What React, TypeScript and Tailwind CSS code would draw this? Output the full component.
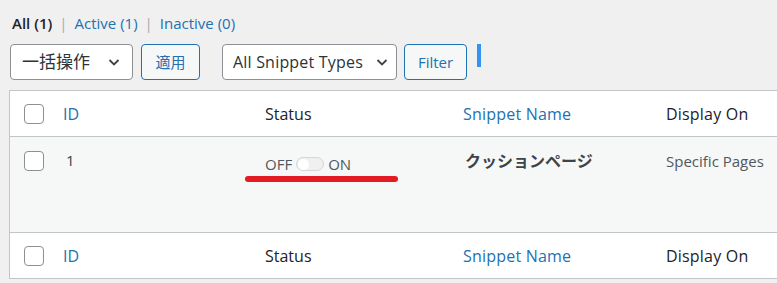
import React from "react";

const Checkbox = () => (
  <span className="block w-5 h-5 rounded border border-[#8c8f94] bg-white" />
);

const Chevron = () => (
  <svg width="16" height="16" viewBox="0 0 16 16" className="text-[#3c434a]">
    <path d="M3.5 6 L8 10.5 L12.5 6" fill="none" stroke="currentColor" strokeWidth="1.8" />
  </svg>
);

const HeaderRow = () => (
  <div className="grid grid-cols-[53px_202px_198px_203px_1fr] items-center h-[45px] bg-white text-[16px]">
    <div className="pl-[14px]">
      <Checkbox />
    </div>
    <div className="text-[#2271b1]">ID</div>
    <div className="text-[#1d2327]">Status</div>
    <div className="text-[#2271b1] tracking-[0.2px]">Snippet Name</div>
    <div className="text-[#1d2327] whitespace-nowrap tracking-[0.2px]">Display On</div>
  </div>
);

const App = () => {
  return (
    <div
      className="w-[777px] h-[283px] overflow-hidden bg-[#f0f0f1]"
      style={{ fontFamily: '"Open Sans", "Noto Sans CJK JP", sans-serif' }}
    >
      <div className="pl-[12px] pt-[11px] flex items-center gap-[7px] text-[15px] h-[22px] mt-[1px] box-content">
        <span className="font-semibold text-[#1d2327]">All (1)</span>
        <span className="text-[#a7aaad]">|</span>
        <span className="text-[#2271b1]">Active (1)</span>
        <span className="text-[#a7aaad]">|</span>
        <span className="text-[#2271b1]">Inactive (0)</span>
      </div>

      <div className="flex items-center pl-[10px] mt-[10px] h-[36px]">
        <div className="flex items-center justify-between w-[123px] h-[36px] border border-[#8c8f94] rounded bg-white pl-[11px] pr-[10px] text-[17px] text-[#2c3338]">
          <span>一括操作</span>
          <Chevron />
        </div>
        <div className="ml-[8px] flex items-center justify-center w-[59px] h-[36px] border border-[#2271b1] rounded bg-[#f6f7f7] text-[15px] text-[#2271b1]">
          適用
        </div>
        <div className="ml-[22px] flex items-center justify-between w-[175px] h-[36px] border border-[#8c8f94] rounded bg-white pl-[10px] pr-[6px] text-[16px] text-[#2c3338] whitespace-nowrap tracking-[0.2px]">
          <span>All Snippet Types</span>
          <Chevron />
        </div>
        <div className="ml-[7px] flex items-center justify-center w-[63px] h-[36px] border border-[#2271b1] rounded bg-[#f6f7f7] text-[15px] text-[#2271b1]">
          Filter
        </div>
        <div className="ml-[10px] self-start w-[4px] h-[23px] bg-[#3393f4]" />
      </div>

      <div className="ml-[9px] mt-[10px] border border-[#c3c4c7] border-r-0">
        <HeaderRow />
        <div className="grid grid-cols-[53px_202px_198px_203px_1fr] h-[97px] bg-[#f6f7f7] border-y border-[#c3c4c7] pt-[14px] text-[15px]">
          <div className="pl-[14px]">
            <Checkbox />
          </div>
          <div className="pl-[3px] text-[#3c434a] leading-[18px]">1</div>
          <div className="-ml-[20px]">
            <div className="flex items-center gap-[4px] pl-[20px] pt-[3px] text-[#50575e] leading-[20px]">
              <span>OFF</span>
              <span className="flex items-center w-[28px] h-[14px] rounded-full border border-[#d5d6d8] bg-[#f0f0f1] px-[1px]">
                <span className="block w-[11px] h-[11px] rounded-full bg-white" />
              </span>
              <span>ON</span>
            </div>
            <div className="mt-[2px] w-[153px] h-[6px] rounded-full bg-[#e31b23]" />
          </div>
          <div className="pl-[2px] font-bold text-[16px] text-[#3c434a] leading-[20px]">クッションページ</div>
          <div className="text-[15px] text-[#50575e] whitespace-nowrap leading-[20px]">Specific Pages</div>
        </div>
        <HeaderRow />
      </div>
    </div>
  );
};

export default App;
